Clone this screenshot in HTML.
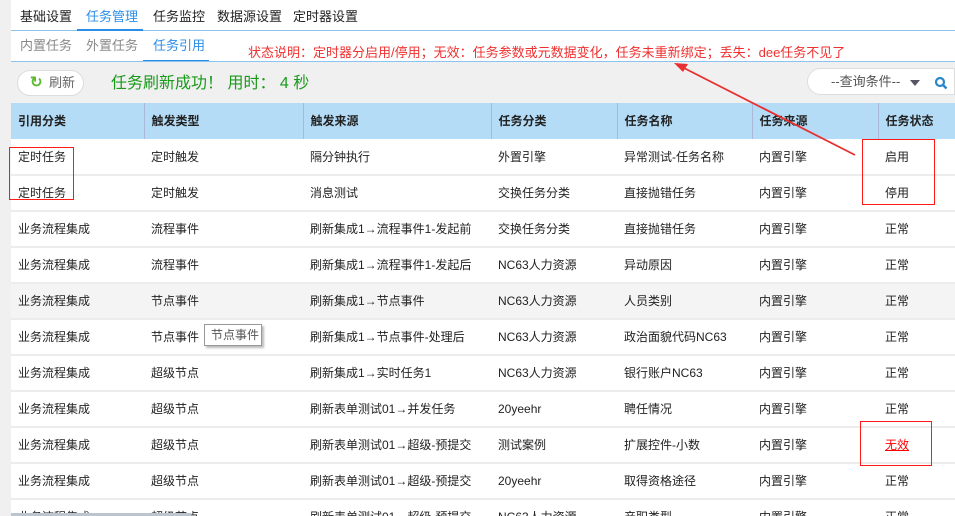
<!DOCTYPE html>
<html><head><meta charset="utf-8"><style>
*{margin:0;padding:0;box-sizing:border-box}
html,body{width:955px;height:516px;overflow:hidden}
body{background:#f0f0f0;font-family:"Liberation Sans","Noto Sans CJK SC",sans-serif;font-size:12px;color:#222;position:relative}
.top{position:absolute;left:11px;top:0;width:944px;height:62px;background:#fff}
.nav1{position:absolute;left:0;top:0;height:31px;width:944px;border-bottom:1px solid #8cc4f0}
.nav1 span{position:absolute;top:8px;font-size:13px;color:#222;line-height:18px}
.nav2 span{position:absolute;top:37px;font-size:13px;color:#888;line-height:18px}
.ul{position:absolute;height:2px;background:#2b8de8}
.line2{position:absolute;left:0;top:61px;width:944px;height:1px;background:#8cc4f0}
.note{position:absolute;left:248px;top:44px;color:#f03030;font-size:13px;white-space:nowrap;line-height:18px}
.btn{position:absolute;left:17px;top:70px;width:67px;height:26px;border:1px solid #ddd;border-radius:13px;background:#fff;color:#666;font-size:13px}
.ok{position:absolute;left:111px;top:73px;color:#1a9a1a;font-size:16px;line-height:22px}
.q{position:absolute;left:807px;top:68px;width:148px;height:27px;border:1px solid #ddd;border-radius:14px 0 0 14px;background:#fff;color:#555;font-size:13px}
table{position:absolute;left:11px;top:103px;border-collapse:collapse;width:944px;background:#fff}
td,th{height:36px;text-align:left;padding-left:7px;border-bottom:2px solid #ececec;white-space:nowrap;font-weight:normal;line-height:16px}
th{background:#b4dcf6;font-weight:bold;border-right:1px solid #a9b8d8;border-bottom:none;height:36px}
tr.g td{background:#f4f4f4}
.box{position:absolute;border:1px solid #ff1a1a}
</style></head><body>
<div class="top">
<div class="nav1">
<span style="left:9px">基础设置</span><span style="left:75px;color:#2b8de8">任务管理</span><span style="left:142px">任务监控</span><span style="left:206px">数据源设置</span><span style="left:282px">定时器设置</span>
</div>
<div class="ul" style="left:66px;top:29px;width:66px"></div>
<div class="nav2"><span style="left:9px">内置任务</span><span style="left:75px">外置任务</span><span style="left:142px;color:#2b8de8">任务引用</span></div>
<div class="ul" style="left:132px;top:60px;width:66px"></div>
<div class="line2"></div>
</div>
<div class="note">状态说明：定时器分启用/停用；无效：任务参数或元数据变化，任务未重新绑定；丢失：dee任务不见了</div>
<div class="btn"><span style="position:absolute;left:12px;top:3px;color:#5cb82e;font-weight:bold;font-size:15px;line-height:18px">↻</span><span style="position:absolute;left:31px;top:4px;line-height:16px">刷新</span></div>
<div class="ok">任务刷新成功！ 用时： 4 秒</div>
<div class="q"><span style="position:absolute;left:23px;top:4px;line-height:17px">--查询条件--</span><span style="position:absolute;left:102px;top:11px;width:0;height:0;border-left:5px solid transparent;border-right:5px solid transparent;border-top:6px solid #556"></span>
<svg style="position:absolute;left:126px;top:7px" width="14" height="14" viewBox="0 0 14 14"><circle cx="6" cy="6" r="4" fill="none" stroke="#2a88c8" stroke-width="2.2"/><path d="M9 9l3.5 3.5" stroke="#2a88c8" stroke-width="2.4"/></svg></div>
<table>
<colgroup><col style="width:133px"><col style="width:159px"><col style="width:188px"><col style="width:126px"><col style="width:135px"><col style="width:126px"><col></colgroup>
<tr><th>引用分类</th><th>触发类型</th><th>触发来源</th><th>任务分类</th><th>任务名称</th><th>任务来源</th><th style="border-right:none">任务状态</th></tr>
<tr><td>定时任务</td><td>定时触发</td><td>隔分钟执行</td><td>外置引擎</td><td>异常测试-任务名称</td><td>内置引擎</td><td>启用</td></tr>
<tr><td>定时任务</td><td>定时触发</td><td>消息测试</td><td>交换任务分类</td><td>直接抛错任务</td><td>内置引擎</td><td>停用</td></tr>
<tr><td>业务流程集成</td><td>流程事件</td><td>刷新集成1→流程事件1-发起前</td><td>交换任务分类</td><td>直接抛错任务</td><td>内置引擎</td><td>正常</td></tr>
<tr><td>业务流程集成</td><td>流程事件</td><td>刷新集成1→流程事件1-发起后</td><td>NC63人力资源</td><td>异动原因</td><td>内置引擎</td><td>正常</td></tr>
<tr class="g"><td>业务流程集成</td><td>节点事件</td><td>刷新集成1→节点事件</td><td>NC63人力资源</td><td>人员类别</td><td>内置引擎</td><td>正常</td></tr>
<tr><td>业务流程集成</td><td>节点事件</td><td>刷新集成1→节点事件-处理后</td><td>NC63人力资源</td><td>政治面貌代码NC63</td><td>内置引擎</td><td>正常</td></tr>
<tr><td>业务流程集成</td><td>超级节点</td><td>刷新集成1→实时任务1</td><td>NC63人力资源</td><td>银行账户NC63</td><td>内置引擎</td><td>正常</td></tr>
<tr><td>业务流程集成</td><td>超级节点</td><td>刷新表单测试01→并发任务</td><td>20yeehr</td><td>聘任情况</td><td>内置引擎</td><td>正常</td></tr>
<tr><td>业务流程集成</td><td>超级节点</td><td>刷新表单测试01→超级-预提交</td><td>测试案例</td><td>扩展控件-小数</td><td>内置引擎</td><td><u style="color:#f00">无效</u></td></tr>
<tr><td>业务流程集成</td><td>超级节点</td><td>刷新表单测试01→超级-预提交</td><td>20yeehr</td><td>取得资格途径</td><td>内置引擎</td><td>正常</td></tr>
<tr><td>业务流程集成</td><td>超级节点</td><td>刷新表单测试01→超级-预提交</td><td>NC63人力资源</td><td>产职类型</td><td>内置引擎</td><td>正常</td></tr>
</table>
<div style="position:absolute;left:204px;top:324px;width:58px;height:22px;border:1px solid #999;background:#fff;box-shadow:2px 2px 2px #bbb;color:#555;font-size:12px;padding:2px 0 0 6px;line-height:16px">节点事件</div>
<div class="box" style="left:9px;top:147px;width:65px;height:53px"></div>
<div class="box" style="left:862px;top:139px;width:73px;height:66px"></div>
<div class="box" style="left:860px;top:421px;width:72px;height:45px"></div>
<svg style="position:absolute;left:0;top:0" width="955" height="516"><path d="M855 155L682 67" stroke="#e83030" stroke-width="1.8"/><path d="M674 63l14 1-5 8z" fill="#e83030"/></svg>
<div style="position:absolute;left:11px;top:513px;width:180px;height:3px;background:#bcc4d0"></div>
</body></html>
